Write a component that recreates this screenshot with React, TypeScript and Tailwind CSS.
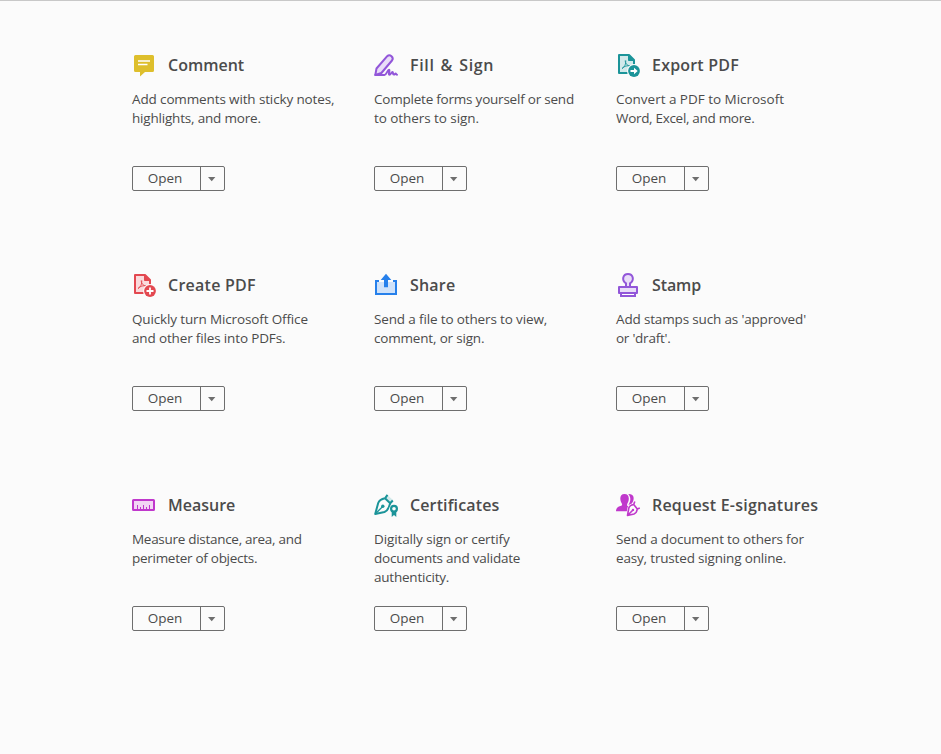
import type { ReactNode } from 'react'

interface Tool {
  title: string
  titleClass: string
  lines: { text: string; className: string }[]
  icon: ReactNode
}

function PdfPage({ color, fill, children }: { color: string; fill: string; children: ReactNode }) {
  return (
    <>
      <path d="M3 2H13L18 7V20H3Z" fill={fill} stroke={color} strokeWidth="2" strokeLinejoin="round" />
      <path d="M12.5 2V7.5H18" fill={color} stroke={color} strokeWidth="1" />
      <path
        d="M9.2 7.5C9 10 11 13 14.5 13C11.4 12.3 8.3 13 6 15.5C8.7 14.3 10 10.8 9.8 7.5"
        fill="none"
        stroke={color}
        strokeWidth=".9"
      />
      <circle cx="18" cy="18" r="7" fill="#fbfbfb" />
      <circle cx="18" cy="18" r="5.9" fill={color} />
      {children}
    </>
  )
}

const tools: Tool[] = [
  {
    title: 'Comment',
    titleClass: 'tracking-normal',
    lines: [
      { text: 'Add comments with sticky notes,', className: 'tracking-[-0.13px]' },
      { text: 'highlights, and more.', className: 'tracking-[-0.19px]' },
    ],
    icon: (
      <>
        <path d="M3.5 2H20.5Q22 2 22 3.5V17.5Q22 19 20.5 19H13L8 23.5V19H3.5Q2 19 2 17.5V3.5Q2 2 3.5 2Z" fill="#debf2c" />
        <path d="M6 8H18M6 11.5H15.5" stroke="#fff" strokeWidth="1.6" />
      </>
    ),
  },
  {
    title: 'Fill & Sign',
    titleClass: 'tracking-[0.65px] [word-spacing:1.3px]',
    lines: [
      { text: 'Complete forms yourself or send', className: 'tracking-[-0.22px]' },
      { text: 'to others to sign.', className: 'tracking-[-0.06px]' },
    ],
    icon: (
      <g fill="none" stroke="#9256d9" strokeWidth="2" strokeLinejoin="round" strokeLinecap="round">
        <path d="M1.3 22L2.5 15.5L13.2 3.2Q15.2 1.2 17.5 3.2Q19.7 5.2 18 7.5L7.4 20Z" fill="#e9ddf8" />
        <path d="M1.3 22H10.5C12.5 22 13.5 16.7 15 16.8C16.4 17 13.8 21.8 15.5 21.8C16.8 21.8 17.5 18.7 18.6 19C19.5 19.2 18.4 21.6 19.8 21.6C20.8 21.6 21 20.5 21.7 20.5C22.4 20.6 21.8 21.7 23 21.7" />
      </g>
    ),
  },
  {
    title: 'Export PDF',
    titleClass: 'tracking-[0.2px]',
    lines: [
      { text: 'Convert a PDF to Microsoft', className: 'tracking-[-0.02px]' },
      { text: 'Word, Excel, and more.', className: 'tracking-[-0.31px]' },
    ],
    icon: (
      <PdfPage color="#1b9499" fill="#d1e9ea">
        <path d="M14.5 17.1H18V14.8L21.7 18L18 21.2V18.9H14.5Z" fill="#fff" />
      </PdfPage>
    ),
  },
  {
    title: 'Create PDF',
    titleClass: 'tracking-[0.25px]',
    lines: [
      { text: 'Quickly turn Microsoft Office', className: 'tracking-[-0.14px]' },
      { text: 'and other files into PDFs.', className: 'tracking-[-0.15px]' },
    ],
    icon: (
      <PdfPage color="#e34850" fill="#fadadc">
        <path d="M14.5 18H21.5M18 14.5V21.5" stroke="#fff" strokeWidth="1.8" />
      </PdfPage>
    ),
  },
  {
    title: 'Share',
    titleClass: 'tracking-[0.2px]',
    lines: [
      { text: 'Send a file to others to view,', className: 'tracking-[-0.14px]' },
      { text: 'comment, or sign.', className: 'tracking-[-0.18px]' },
    ],
    icon: (
      <>
        <path d="M3 9H21V20H3Z" fill="#cfe2fa" />
        <path d="M5 8H2V21H22V8H19" fill="none" stroke="#2680eb" strokeWidth="2" />
        <path d="M12 .8L17.3 7H14V14.3H10V7H6.7Z" fill="#2680eb" />
      </>
    ),
  },
  {
    title: 'Stamp',
    titleClass: 'tracking-[-0.1px]',
    lines: [
      { text: "Add stamps such as 'approved'", className: 'tracking-[-0.16px]' },
      { text: "or 'draft'.", className: 'tracking-[-0.25px]' },
    ],
    icon: (
      <g fill="#e9ddf8" stroke="#9256d9" strokeWidth="2">
        <path d="M5 20V23H19V20" fill="#fff" />
        <path d="M10 14V10.3C5.2 7.5 6.9 1 12 1S18.8 7.5 14 10.3V14" />
        <rect x="3" y="14" width="18" height="6" strokeLinejoin="round" />
      </g>
    ),
  },
  {
    title: 'Measure',
    titleClass: 'tracking-normal',
    lines: [
      { text: 'Measure distance, area, and', className: 'tracking-[-0.29px]' },
      { text: 'perimeter of objects.', className: 'tracking-[-0.28px]' },
    ],
    icon: (
      <>
        <rect x="1" y="7" width="21" height="10" rx=".5" fill="#f2d6f4" stroke="#c038cc" strokeWidth="2" />
        <path d="M5.5 16V12M8.5 16V14M11.5 16V12M14.5 16V14M17.5 16V12" stroke="#c038cc" strokeWidth="1" />
      </>
    ),
  },
  {
    title: 'Certificates',
    titleClass: 'tracking-[0.13px]',
    lines: [
      { text: 'Digitally sign or certify', className: 'tracking-[-0.12px]' },
      { text: 'documents and validate', className: 'tracking-[-0.22px]' },
      { text: 'authenticity.', className: 'tracking-[-0.22px]' },
    ],
    icon: (
      <g fill="none" stroke="#1b9499" strokeWidth="2" strokeLinejoin="round">
        <path d="M14 2.5L19 7L17 9.5L11.5 5Z" fill="#d1e9ea" stroke="none" />
        <path d="M13.5 1.8L11 5.3Q5.5 6.5 4.2 10L1.2 21L10.5 19Q14.5 17.5 16.2 10.3L18.8 7.5M11 5.3L16.2 10.3" />
        <path d="M1.5 20.7L8.5 13.7" strokeWidth="1.3" />
        <circle cx="8.8" cy="13.3" r="1.7" fill="#1b9499" stroke="none" />
        <circle cx="20" cy="15.8" r="4.7" fill="#fbfbfb" stroke="none" />
        <path d="M17.7 18V24L20 22L22.3 24V18" fill="#1b9499" stroke="none" />
        <circle cx="20" cy="15.8" r="2.9" fill="#fbfbfb" strokeWidth="2.2" />
      </g>
    ),
  },
  {
    title: 'Request E-signatures',
    titleClass: 'tracking-[0.21px]',
    lines: [
      { text: 'Send a document to others for', className: 'tracking-[-0.17px]' },
      { text: 'easy, trusted signing online.', className: 'tracking-[-0.17px]' },
    ],
    icon: (
      <g fill="#c038cc">
        <path d="M8.5 1C12.2 1 13.3 4 12.6 7.5C12.3 9.5 11 10.7 11 12.2C11.3 13.5 13.5 13.5 14.5 14.5L12.5 18.3H0C0 14.5 2.5 13.6 5.3 12.8C6.8 12 6 10.7 5 9C3.5 5 4.3 1 8.5 1Z" />
        <path d="M12.3 1C17.8 .6 18.5 5.3 17 8.5C16.3 10 15.4 10.4 15.3 12L13.4 13.2L12.6 11.5C15 8 15 4 12.3 1Z" />
        <path
          d="M18.8 8.5L17.7 11.5Q13.5 12.3 12.8 15L11.5 22.5L18 21Q20.7 20 21.3 16L23.8 15"
          fill="#fbfbfb"
          stroke="#fbfbfb"
          strokeWidth="2.8"
          strokeLinejoin="round"
        />
        <path
          d="M18.8 8.5L17.7 11.5Q13.5 12.3 12.8 15L11.5 22.5L18 21Q20.7 20 21.3 16L23.8 15M17.7 11.5L21.3 16M12 22L16.7 17.2"
          fill="none"
          stroke="#c038cc"
          strokeWidth="1.6"
          strokeLinejoin="round"
        />
        <circle cx="17" cy="16.9" r="1.2" />
      </g>
    ),
  },
]

function OpenButton() {
  return (
    <div className="flex h-[25px] w-[93px] rounded-xs border border-[#6e6e6e] text-[#4b4b4b]">
      <button className="w-[68px] border-r border-[#6e6e6e] pr-[3px] text-[13.5px] leading-[23px]">Open</button>
      <button className="flex flex-1 items-center justify-center pt-px pr-[3px]" aria-label="More options">
        <svg width="7" height="4" viewBox="0 0 7 4" className="overflow-visible">
          <path d="M0 0H7.4L3.7 4.3Z" fill="#6e6e6e" />
        </svg>
      </button>
    </div>
  )
}

function ToolCard({ tool }: { tool: Tool }) {
  return (
    <div className="flex h-[220px] flex-col items-start">
      <div className="flex h-6 items-center gap-3">
        <svg width="24" height="24" viewBox="0 0 24 24" className="shrink-0 overflow-visible">
          {tool.icon}
        </svg>
        <h2 className="text-[16px] leading-6 font-semibold whitespace-nowrap">
          <span className={tool.titleClass}>{tool.title}</span>
        </h2>
      </div>
      <p className="mt-[13px] h-[76px] text-[13.5px] leading-[19px] whitespace-nowrap">
        {tool.lines.map(line => (
          <span key={line.text} className="block">
            <span className={line.className}>{line.text}</span>
          </span>
        ))}
      </p>
      <OpenButton />
    </div>
  )
}

export default function App() {
  return (
    <main className="h-[754px] w-[941px] overflow-hidden border-t border-[#c8c8c8] bg-[#fbfbfb] pt-[52px] pl-[132px] font-['Open_Sans',sans-serif] text-[#4b4b4b]">
      <div className="grid grid-cols-[repeat(3,242px)]">
        {tools.map(tool => (
          <ToolCard key={tool.title} tool={tool} />
        ))}
      </div>
    </main>
  )
}
